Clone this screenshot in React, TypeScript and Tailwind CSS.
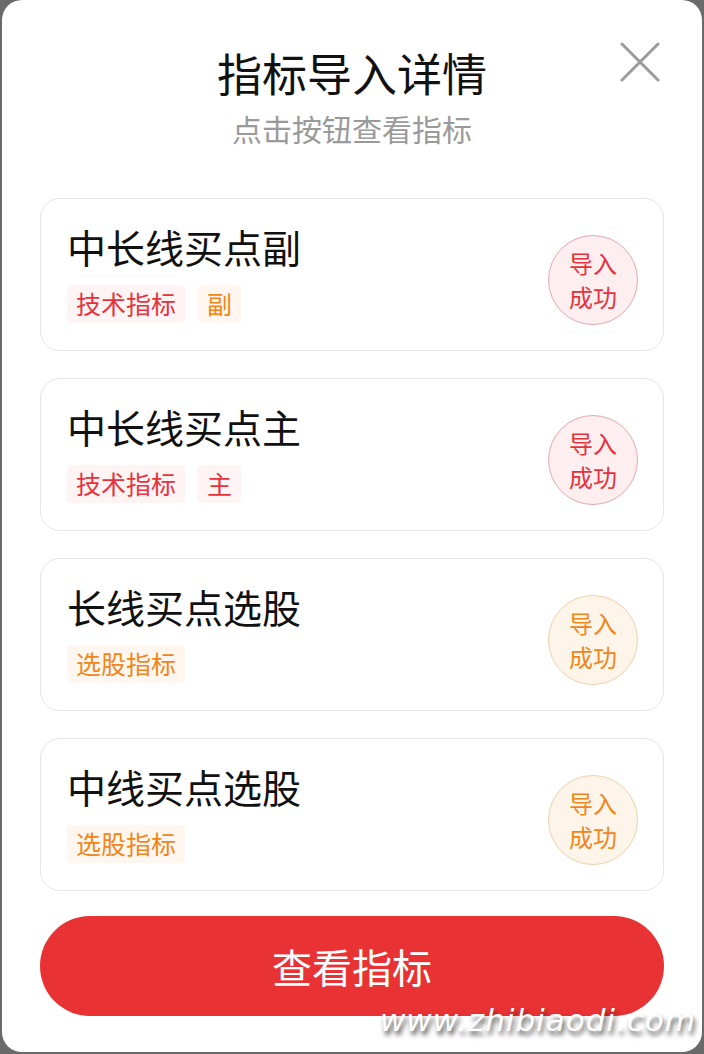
import React from 'react';

type Tone = 'red' | 'orange';

interface Tag {
  label: string;
  tone: Tone;
}

interface Item {
  name: string;
  tags: Tag[];
  tone: Tone;
}

const items: Item[] = [
  { name: '中长线买点副', tags: [{ label: '技术指标', tone: 'red' }, { label: '副', tone: 'orange' }], tone: 'red' },
  { name: '中长线买点主', tags: [{ label: '技术指标', tone: 'red' }, { label: '主', tone: 'red' }], tone: 'red' },
  { name: '长线买点选股', tags: [{ label: '选股指标', tone: 'orange' }], tone: 'orange' },
  { name: '中线买点选股', tags: [{ label: '选股指标', tone: 'orange' }], tone: 'orange' },
];

const tagStyles: Record<Tone, string> = {
  red: 'bg-[#fef4f4] text-[#e6323c]',
  orange: 'bg-[#fff7ef] text-[#f0861a]',
};

const badgeStyles: Record<Tone, string> = {
  red: 'bg-[#fdeff0] border-[#e4a7b0] text-[#e6323c]',
  orange: 'bg-[#fef5ea] border-[#eed0ab] text-[#f0861a]',
};

const IndicatorCard = ({ item }: { item: Item }) => (
  <div className="flex items-center justify-between h-[153px] rounded-[20px] border border-[#e6e6e6] pl-[26px] pr-[25px]">
    <div className="flex flex-col">
      <div className="text-[39px] leading-[40px] text-[#111]">{item.name}</div>
      <div className="flex gap-[13px] mt-[19px]">
        {item.tags.map((tag) => (
          <span
            key={tag.label}
            className={`h-[38px] px-[9px] flex items-center text-[25px] rounded-[4px] ${tagStyles[tag.tone]}`}
          >
            {tag.label}
          </span>
        ))}
      </div>
    </div>
    {/* status badge */}
    <div
      className={`mt-[11px] w-[90px] h-[90px] rounded-full border flex flex-col items-center justify-center text-[24px] leading-[34px] ${badgeStyles[item.tone]}`}
    >
      <span>导入</span>
      <span>成功</span>
    </div>
  </div>
);

export default function App() {
  return (
    <div
      className="w-[704px] h-[1054px] bg-[#6a6a6a] pl-[2px] pr-[2px] pb-[2px]"
      style={{ fontFamily: '"Noto Sans CJK SC", "Noto Sans", sans-serif' }}
    >
      <div className="relative h-full bg-white rounded-[20px] px-[38px] pt-[47px]">
        <button className="absolute right-[42px] top-[42px] w-[40px] h-[40px] flex items-center justify-center">
          <svg width="40" height="40" viewBox="0 0 40 40" fill="none">
            <path d="M2 2 L38 38 M38 2 L2 38" stroke="#9b9b9b" strokeWidth="3" strokeLinecap="round" />
          </svg>
        </button>

        <div className="text-center text-[45px] leading-[52px] text-[#111]">指标导入详情</div>
        <div className="text-center text-[30px] leading-[36px] text-[#9a9a9a] mt-[11px]">点击按钮查看指标</div>

        <div className="flex flex-col gap-[27px] mt-[52px]">
          {items.map((item) => (
            <IndicatorCard key={item.name} item={item} />
          ))}
        </div>

        <button className="mt-[25px] w-full h-[100px] rounded-full bg-[#e83234] text-white text-[40px] flex items-center justify-center">
          查看指标
        </button>

        {/* watermark */}
        <div
          className="absolute right-[6px] bottom-[14px] italic text-white text-[31px] leading-[36px] tracking-[1px]"
          style={{
            fontFamily: '"DejaVu Sans", sans-serif',
            textShadow: '2px 4px 5px rgba(0,0,0,0.7)',
          }}
        >
          www.zhibiaodi.com
        </div>
      </div>
    </div>
  );
}
